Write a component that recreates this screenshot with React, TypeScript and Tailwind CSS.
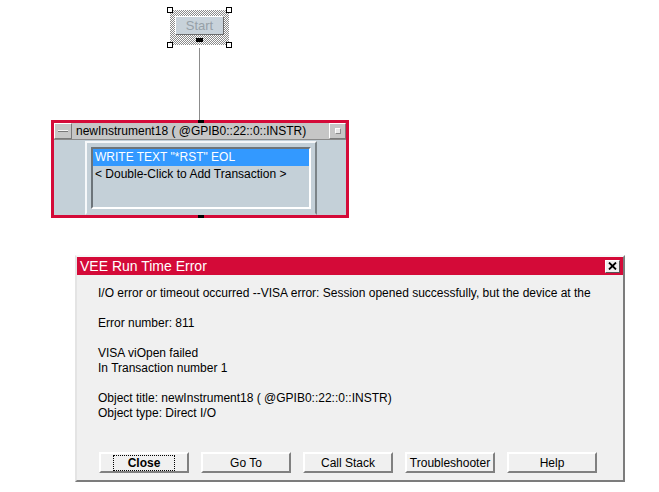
import React from "react";

const lines: (string | null)[] = [
  "I/O error or timeout occurred --VISA error: Session opened successfully, but the device at the",
  null,
  "Error number: 811",
  null,
  "VISA viOpen failed",
  "In Transaction number 1",
  null,
  "Object title: newInstrument18 ( @GPIB0::22::0::INSTR)",
  "Object type: Direct I/O",
];

const buttons = ["Close", "Go To", "Call Stack", "Troubleshooter", "Help"];

const Handle = ({ className }: { className: string }) => (
  <div className={`absolute w-[6px] h-[6px] bg-white border border-black ${className}`} />
);

const App = () => {
  return (
    <div
      className="relative w-[659px] h-[492px] bg-white overflow-hidden text-[12px] text-black"
      style={{ fontFamily: '"Liberation Sans", Arial, sans-serif' }}
    >
      {/* Start node */}
      <div className="absolute left-[170px] top-[10px] w-[59px] h-[35px] bg-[repeating-conic-gradient(#8a8a8a_0_25%,#ffffff_0_50%)] bg-[length:2px_2px] flex flex-col items-center pt-[6px]">
        <div className="w-[49px] h-[19px] bg-[#c8d2da] border border-t-white border-l-white border-r-[#6c6c6c] border-b-[#6c6c6c] flex items-center justify-center text-[13px] text-[#96a0a8]">
          Start
        </div>
        <div className="w-[7px] h-[4px] bg-black mt-[3px]" />
      </div>
      <Handle className="left-[167px] top-[7px]" />
      <Handle className="left-[226px] top-[7px]" />
      <Handle className="left-[167px] top-[42px]" />
      <Handle className="left-[226px] top-[42px]" />

      {/* connector line */}
      <div className="absolute left-[199px] top-[48px] w-px h-[72px] bg-[#8c8c8c]" />

      {/* Instrument node */}
      <div className="absolute left-[51px] top-[120px] w-[298px] h-[98px] border-[3px] border-[#d40a38] bg-[#c4d0d8] flex flex-col">
        <div className="absolute left-[144px] -top-[3px] w-[6px] h-[3px] bg-black" />
        <div className="absolute left-[144px] -bottom-[3px] w-[6px] h-[3px] bg-black" />
        <div className="h-[17px] bg-[#c6c6c6] flex items-stretch border-b border-[#8a8a8a]">
          <div className="w-[18px] border border-t-white border-l-white border-r-[#7a7a7a] border-b-[#7a7a7a] flex items-center justify-center">
            <div className="w-[10px] h-[2px] bg-[#f4f4f4] border-b border-[#777]" />
          </div>
          <div className="flex-1 pl-[4px] leading-[16px] text-[12px] text-black whitespace-nowrap">
            newInstrument18 ( @GPIB0::22::0::INSTR)
          </div>
          <div className="w-[17px] border border-t-white border-l-white border-r-[#7a7a7a] border-b-[#7a7a7a] flex items-center justify-center">
            <div className="w-[6px] h-[6px] bg-[#e8e8e8] border border-[#8a8a8a] border-t-white border-l-white" />
          </div>
        </div>
        <div className="flex-1 flex justify-center pl-[2px] pt-[1px]">
          <div className="w-[232px] h-full bg-[#c4d0d8] border-2 border-t-[#f6f8fa] border-l-[#f6f8fa] border-r-[#7c8488] border-b-transparent px-[4px] pt-[4px]">
            <div className="h-[62px] border-2 border-t-[#6c747a] border-l-[#6c747a] border-r-white border-b-white bg-[#c4d0d8] leading-[16px]">
              <div className="bg-[#3399ff] text-white pl-[2px] h-[17px]">WRITE TEXT "*RST" EOL</div>
              <div className="pl-[2px]">&lt; Double-Click to Add Transaction &gt;</div>
            </div>
          </div>
        </div>
      </div>

      {/* Error dialog */}
      <div className="absolute left-[75px] top-[255px] w-[550px] h-[227px] bg-[#f0f0f0] border-2 border-t-[#f8f8f8] border-l-[#e4e4e4] border-r-[#7c7c7c] border-b-[#7c7c7c] flex flex-col">
        <div className="h-[18px] bg-[#d40a38] flex items-center justify-between pl-[3px] pr-[3px]">
          <span className="text-white text-[14px] leading-[18px]">VEE Run Time Error</span>
          <div className="w-[15px] h-[13px] bg-[#f0f0f0] border border-t-white border-l-white border-r-[#555] border-b-[#555] flex items-center justify-center">
            <svg width="9" height="8" viewBox="0 0 9 8">
              <path d="M1 0.5 L8 7.5 M8 0.5 L1 7.5" stroke="#000" strokeWidth="1.8" />
            </svg>
          </div>
        </div>
        <div className="pl-[21px] pt-[11px] leading-[15px] whitespace-nowrap overflow-hidden">
          {lines.map((l, i) => (
            <div key={i} className="h-[15px]">{l ?? ""}</div>
          ))}
        </div>
        <div className="mt-auto mb-[7px] flex gap-[12px] pl-[22px]">
          {buttons.map((b, i) => (
            <div
              key={b}
              className="w-[90px] h-[21px] bg-[#f0f0f0] border-2 border-t-white border-l-white border-r-[#808080] border-b-[#808080] flex items-center justify-center"
            >
              {i === 0 ? (
                <span className="font-bold px-[14px] border border-dotted border-black leading-[14px]">{b}</span>
              ) : (
                <span>{b}</span>
              )}
            </div>
          ))}
        </div>
      </div>
    </div>
  );
};

export default App;
